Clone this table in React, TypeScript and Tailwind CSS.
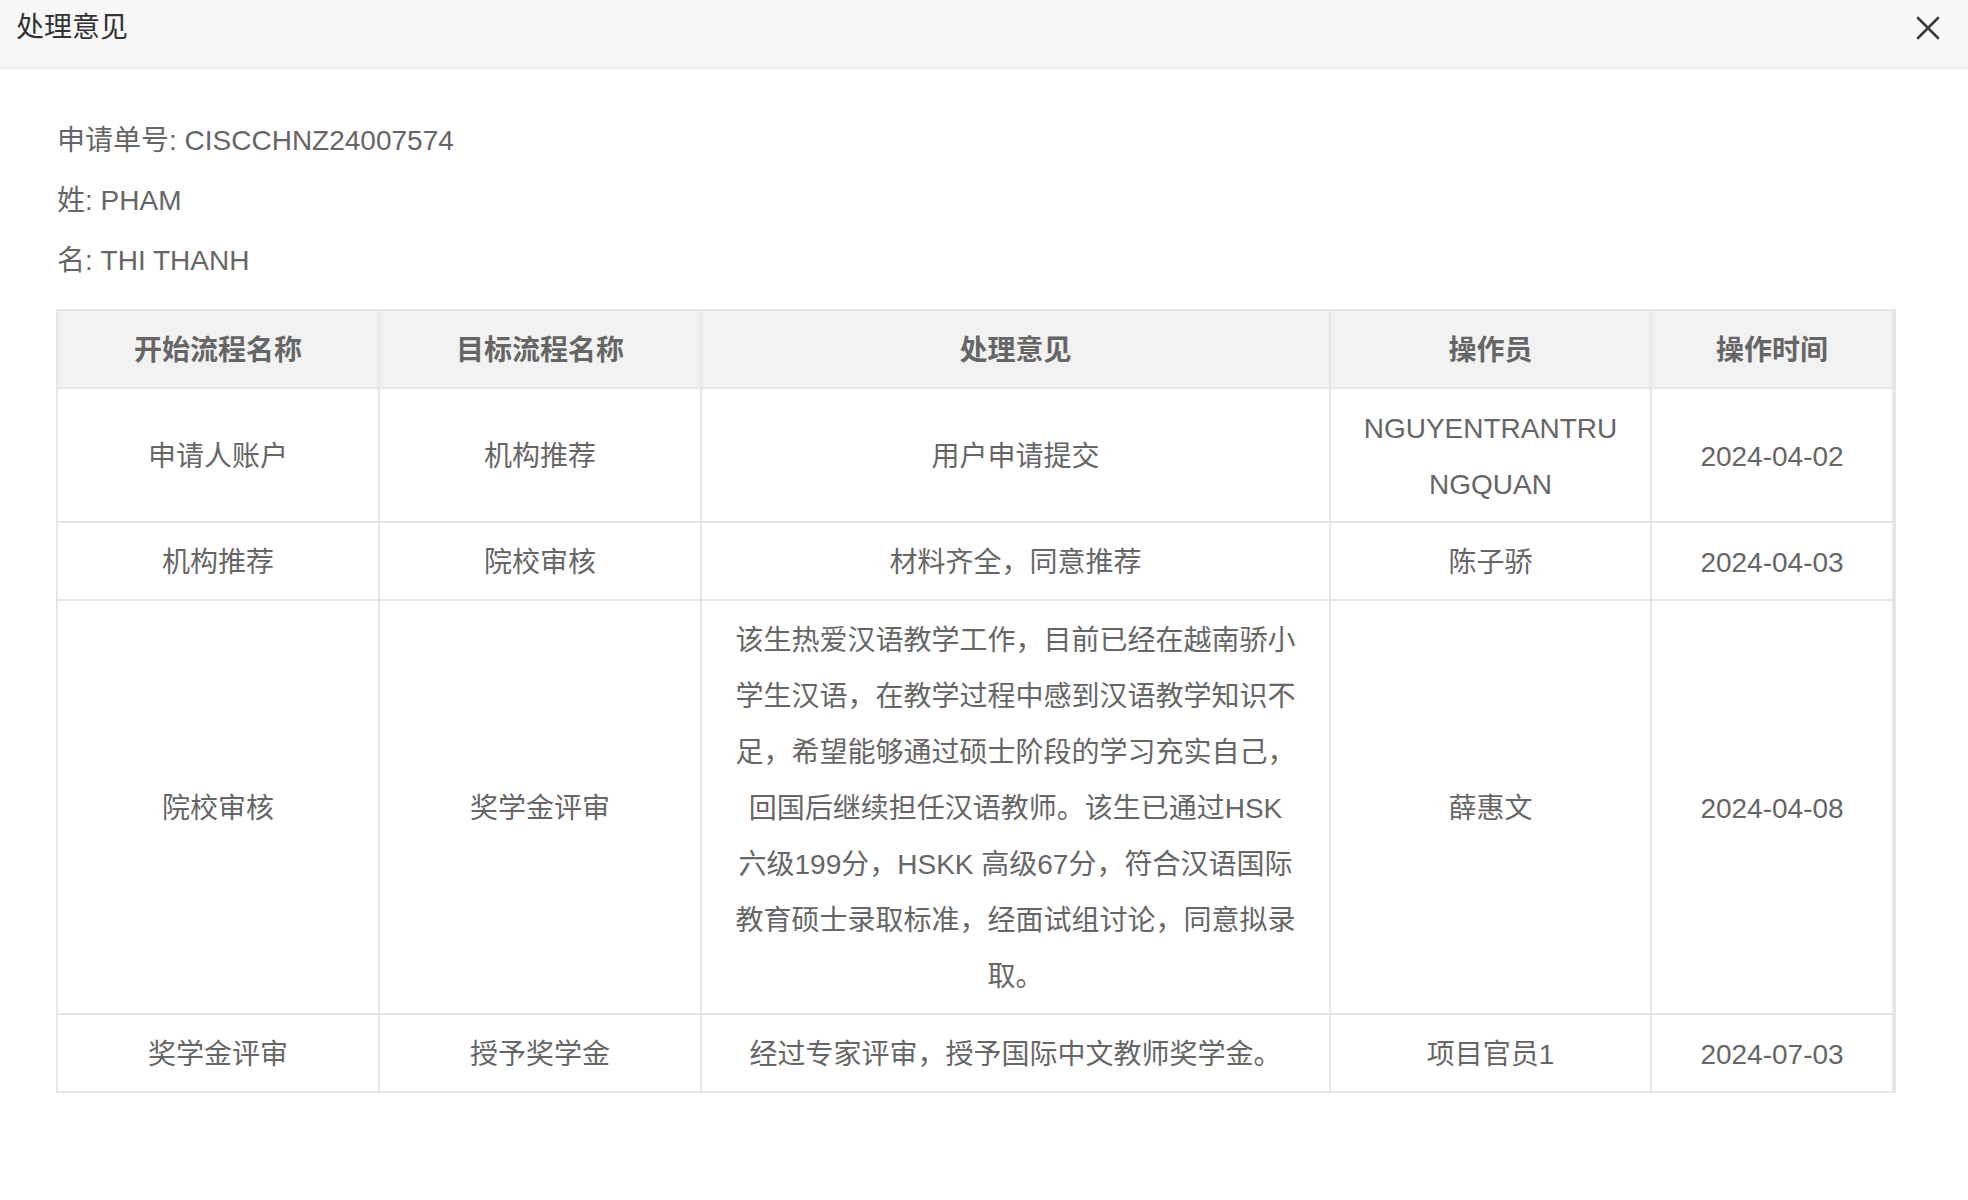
import React from "react";

const font = { fontFamily: '"Liberation Sans", "Noto Sans CJK SC", sans-serif' };

type Row = { from: string; to: string; opinion: React.ReactNode; op: React.ReactNode; time: string };

const rows: Row[] = [
  { from: "申请人账户", to: "机构推荐", opinion: "用户申请提交", op: "NGUYENTRANTRUNGQUAN", time: "2024-04-02" },
  { from: "机构推荐", to: "院校审核", opinion: "材料齐全，同意推荐", op: "陈子骄", time: "2024-04-03" },
  {
    from: "院校审核",
    to: "奖学金评审",
    opinion: (
      <>
        该生热爱汉语教学工作，目前已经在越南骄小
        <br />
        学生汉语，在教学过程中感到汉语教学知识不
        <br />
        足，希望能够通过硕士阶段的学习充实自己，
        <br />
        回国后继续担任汉语教师。该生已通过HSK
        <br />
        六级199分，HSKK 高级67分，符合汉语国际
        <br />
        教育硕士录取标准，经面试组讨论，同意拟录
        <br />
        取。
      </>
    ),
    op: "薛惠文",
    time: "2024-04-08",
  },
  { from: "奖学金评审", to: "授予奖学金", opinion: "经过专家评审，授予国际中文教师奖学金。", op: "项目官员1", time: "2024-07-03" },
];

const cell =
  "border-r-2 border-b-2 border-[#e6e6e6] px-[30px] pt-[12px] pb-[8px] leading-[56px] text-center text-[28px] text-[#666] align-middle break-all";

export default function App() {
  return (
    <div className="w-[1968px] h-[1200px] bg-white" style={font}>
      <div className="h-[69px] bg-[#f8f8f8] border-b-2 border-[#eeeeee] flex items-start justify-between">
        <div className="pl-[16px] text-[28px] leading-[56px] text-[#333]">处理意见</div>
        <svg className="mt-[16px] mr-[28px]" width="24" height="24" viewBox="0 0 24 24" fill="none">
          <path d="M2 2 L22 22 M22 2 L2 22" stroke="#3a3a3a" strokeWidth="2.6" strokeLinecap="round" />
        </svg>
      </div>
      <div className="pt-[42px] ml-[57px] text-[28px] leading-[60px] text-[#666]">
        <div>申请单号: CISCCHNZ24007574</div>
        <div>姓: PHAM</div>
        <div>名: THI THANH</div>
      </div>
      <div className="pt-[18px] pl-[56px]">
        <table className="table-fixed border-separate border-spacing-0 w-[1840px] border-t-2 border-l-2 border-r-2 border-[#e6e6e6]">
          <colgroup>
            <col className="w-[322px]" />
            <col className="w-[322px]" />
            <col className="w-[629px]" />
            <col className="w-[321px]" />
            <col className="w-[242px]" />
          </colgroup>
          <thead>
            <tr className="bg-[#f2f2f2]">
              {["开始流程名称", "目标流程名称", "处理意见", "操作员", "操作时间"].map((h) => (
                <th key={h} className={cell + " font-bold"}>
                  {h}
                </th>
              ))}
            </tr>
          </thead>
          <tbody>
            {rows.map((r, i) => (
              <tr key={i}>
                <td className={cell}>{r.from}</td>
                <td className={cell}>{r.to}</td>
                <td className={cell}>{r.opinion}</td>
                <td className={cell}>{r.op}</td>
                <td className={cell}>{r.time}</td>
              </tr>
            ))}
          </tbody>
        </table>
      </div>
    </div>
  );
}
